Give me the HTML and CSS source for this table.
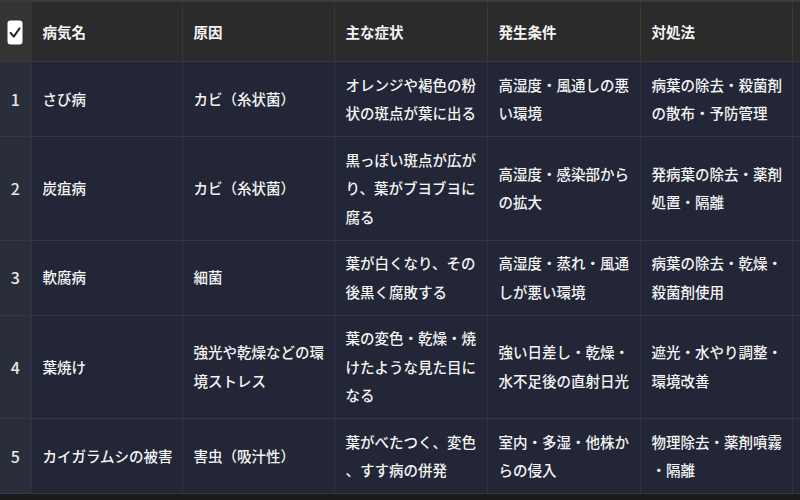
FILE: index.html
```html
<!DOCTYPE html>
<html lang="ja">
<head>
<meta charset="utf-8">
<link rel="stylesheet" href="styles.css">
</head>
<body>
<div class="wrap">
<table class="grid">
  <colgroup>
    <col class="c0"><col class="c1"><col class="c2"><col class="c3"><col class="c4"><col class="c5"><col class="c6">
  </colgroup>
  <thead>
    <tr>
      <th class="idx"><span class="check"><svg viewBox="0 0 16 25" width="16" height="25"><rect x="0.5" y="0.5" width="15" height="24" rx="3" fill="#fff"/><path d="M3.6 12.8 L6.8 16.6 L12.6 8.2" fill="none" stroke="#222" stroke-width="2" stroke-linecap="round" stroke-linejoin="round"/></svg></span></th>
      <th>病気名</th><th>原因</th><th>主な症状</th><th>発生条件</th><th>対処法</th><th></th>
    </tr>
  </thead>
  <tbody>
    <tr>
      <td class="idx">1</td><td>さび病</td><td>カビ（糸状菌）</td><td>オレンジや褐色の粉状の斑点が葉に出る</td><td>高湿度・風通しの悪い環境</td><td>病葉の除去・殺菌剤の散布・予防管理</td><td></td>
    </tr>
    <tr>
      <td class="idx">2</td><td>炭疽病</td><td>カビ（糸状菌）</td><td>黒っぽい斑点が広がり、葉がブヨブヨに腐る</td><td>高湿度・感染部からの拡大</td><td>発病葉の除去・薬剤処置・隔離</td><td></td>
    </tr>
    <tr>
      <td class="idx">3</td><td>軟腐病</td><td>細菌</td><td>葉が白くなり、その後黒く腐敗する</td><td>高湿度・蒸れ・風通しが悪い環境</td><td>病葉の除去・乾燥・殺菌剤使用</td><td></td>
    </tr>
    <tr>
      <td class="idx">4</td><td>葉焼け</td><td>強光や乾燥などの環境ストレス</td><td>葉の変色・乾燥・焼けたような見た目になる</td><td>強い日差し・乾燥・水不足後の直射日光</td><td>遮光・水やり調整・環境改善</td><td></td>
    </tr>
    <tr>
      <td class="idx">5</td><td>カイガラムシの被害</td><td>害虫（吸汁性）</td><td>葉がべたつく、変色、すす病の併発</td><td>室内・多湿・他株からの侵入</td><td>物理除去・薬剤噴霧・隔離</td><td></td>
    </tr>
  </tbody>
</table>
</div>
</body>
</html>
```

FILE: styles.css
```css
html, body {
  margin: 0;
  padding: 0;
  background: #1b1b1b;
}
.wrap {
  width: 800px;
  height: 500px;
  overflow: hidden;
  background: #1b1b1b;
}
.grid {
  width: 830px;
  table-layout: fixed;
  border-collapse: collapse;
  font-family: "Noto Sans CJK JP", "Noto Sans", sans-serif;
  font-size: 14.5px;
  color: #f4f4f4;
  line-break: anywhere;
  word-break: break-all;
}
.c0 { width: 31px; }
.c1 { width: 151px; }
.c2 { width: 152px; }
.c3 { width: 153px; }
.c4 { width: 153px; }
.c5 { width: 152px; }
.c6 { width: 38px; }
thead tr {
  border-top: 2px solid #3b3b3b;
}
th {
  height: 59px;
  background: #2b2b2b;
  text-align: left;
  font-weight: 700;
  padding: 0 8px 0 11px;
  border-right: 1px solid #383838;
  border-bottom: 1px solid #3a3a3a;
  vertical-align: middle;
}
th.idx {
  background: #343434;
  padding: 0;
  text-align: center;
}
.check {
  display: inline-block;
  width: 16px;
  height: 25px;
  vertical-align: middle;
  margin-top: 2px;
}
.check svg { display: block; }
td {
  background: #222636;
  padding: 8.5px 7px 8.5px 11px;
  line-height: 28.5px;
  vertical-align: middle;
  border-right: 1px solid #2f3341;
  border-bottom: 1px solid #333746;
  font-weight: 500;
}
td.idx {
  background: #2a2e3a;
  padding: 0;
  text-align: center;
  color: #e8e8e8;
  font-size: 16px;
}
```
